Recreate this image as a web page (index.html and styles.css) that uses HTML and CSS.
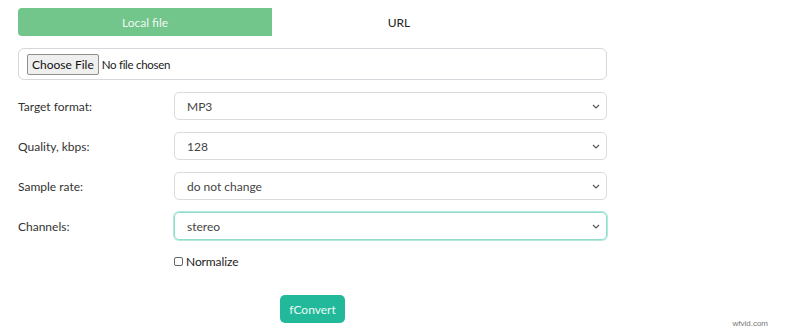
FILE: index.html
```html
<!DOCTYPE html>
<html>
<head>
<meta charset="utf-8">
<link rel="stylesheet" href="styles.css">
</head>
<body>
<div class="page">
  <div class="tabs">
    <div class="tab active">Local file</div>
    <div class="tab">URL</div>
  </div>
  <div class="filebox">
    <span class="choose">Choose File</span>
    <span class="nofile">No file chosen</span>
  </div>
  <div class="form">
    <div class="row">
      <label class="lbl">Target format:</label>
      <div class="select"><span>MP3</span><svg class="chev" viewBox="0 0 8 5" width="8" height="5"><path d="M1 1l3 3 3-3" fill="none" stroke="#555" stroke-width="1.1"/></svg></div>
    </div>
    <div class="row">
      <label class="lbl">Quality, kbps:</label>
      <div class="select"><span>128</span><svg class="chev" viewBox="0 0 8 5" width="8" height="5"><path d="M1 1l3 3 3-3" fill="none" stroke="#555" stroke-width="1.1"/></svg></div>
    </div>
    <div class="row">
      <label class="lbl">Sample rate:</label>
      <div class="select"><span>do not change</span><svg class="chev" viewBox="0 0 8 5" width="8" height="5"><path d="M1 1l3 3 3-3" fill="none" stroke="#555" stroke-width="1.1"/></svg></div>
    </div>
    <div class="row">
      <label class="lbl">Channels:</label>
      <div class="select focus"><span>stereo</span><svg class="chev" viewBox="0 0 8 5" width="8" height="5"><path d="M1 1l3 3 3-3" fill="none" stroke="#555" stroke-width="1.1"/></svg></div>
    </div>
    <div class="check">
      <span class="box"></span><span>Normalize</span>
    </div>
    <div class="actions">
      <button class="convert">fConvert</button>
    </div>
  </div>
</div>
<div class="watermark">wfvid.com</div>
</body>
</html>
```
FILE: styles.css
```css
* { box-sizing: border-box; }
html, body { margin: 0; padding: 0; background: #fff; }
body {
  font-family: Lato, "Open Sans", sans-serif;
  font-size: 12px;
  color: #333;
  width: 800px;
  height: 331px;
  overflow: hidden;
  position: relative;
}
.page {
  padding: 8px 0 0 18px;
  width: 607px;
}
.tabs {
  display: flex;
  height: 28px;
}
.tab {
  width: 254px;
  display: flex;
  align-items: center;
  justify-content: center;
  font-size: 12px;
  color: #222;
}
.tab.active {
  background: #72c58b;
  color: #eef8f1;
  border-radius: 4px 0 0 4px;
}
.filebox {
  margin-top: 12px;
  height: 32px;
  border: 1px solid #d5d8dc;
  border-radius: 6px;
  display: flex;
  align-items: center;
  padding-left: 8px;
}
.choose {
  display: inline-flex;
  align-items: center;
  height: 21px;
  padding: 0 4px;
  background: #efefef;
  border: 1px solid #8f8f8f;
  border-radius: 2px;
  color: #111;
  font-size: 12px;
  margin-right: 3px;
}
.nofile { color: #222; font-size: 11.5px; letter-spacing: -0.3px; }
.form {
  margin-top: 12px;
  display: flex;
  flex-direction: column;
  gap: 12px;
}
.row {
  display: flex;
  align-items: center;
  height: 28px;
}
.lbl {
  width: 156px;
  flex: none;
  color: #333;
}
.select {
  flex: 1;
  height: 28px;
  border: 1px solid #d9dcdf;
  border-radius: 5px;
  display: flex;
  align-items: center;
  justify-content: space-between;
  padding: 0 6px 0 12px;
  color: #444;
}
.select.focus {
  border-color: #8fdccb;
  box-shadow: 0 0 0 1px #b4eade;
}
.chev { flex: none; }
.check {
  display: flex;
  align-items: center;
  margin-left: 156px;
  margin-top: 2px;
  color: #222;
  font-size: 12px;
  letter-spacing: -0.1px;
}
.box {
  width: 9px;
  height: 9px;
  border: 1px solid #666;
  border-radius: 2px;
  margin-right: 3px;
}
.actions {
  margin-left: 262px;
  margin-top: 14px;
}
.convert {
  width: 65px;
  height: 28px;
  border: none;
  border-radius: 5px;
  background: #22b99b;
  color: #eafaf5;
  font-family: Lato, sans-serif;
  font-size: 12px;
  padding: 0;
}
.watermark {
  position: absolute;
  right: 32px;
  bottom: 3px;
  font-size: 8px;
  color: #777;
  font-family: "Liberation Sans", sans-serif;
}
```
